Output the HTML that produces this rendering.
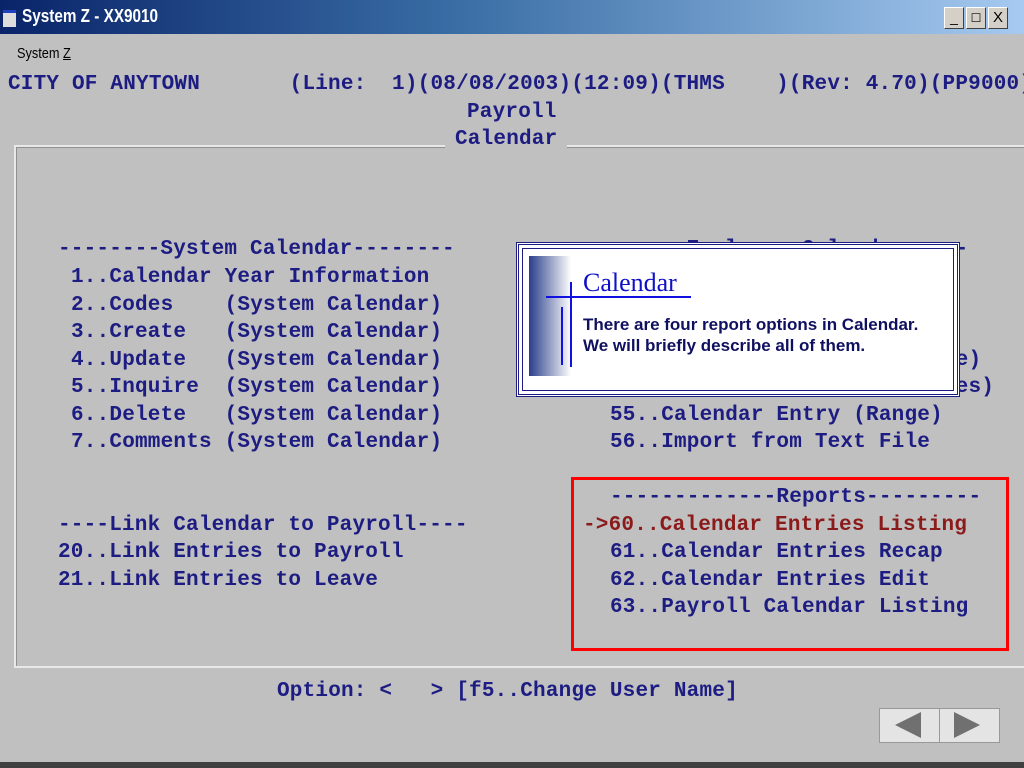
<!DOCTYPE html>
<html><head><meta charset="utf-8"><style>
body{margin:0;width:1024px;height:768px;background:#c0c0c0;position:relative;overflow:hidden;font-family:"Liberation Sans",sans-serif}
.t{position:absolute;font-family:"Liberation Mono",monospace;font-weight:bold;font-size:21px;letter-spacing:0.2px;color:#1c1c82;white-space:pre;line-height:24px}
</style></head><body>
<div style="position:absolute;left:0;top:0;width:1024px;height:34px;background:linear-gradient(90deg,#0a246a 0%,#3a6ea5 45%,#a6caf0 100%)"></div>
<div style="position:absolute;left:3px;top:10px;width:13px;height:14px;background:#ddd;border-top:3px solid #2040c0"></div>
<div style="position:absolute;left:22px;top:6px;color:#fff;font-size:18px;font-weight:bold;transform:scaleX(.85);transform-origin:left">System Z - XX9010</div>
<div style="position:absolute;left:944px;top:7px;width:74px;height:22px;display:flex;gap:2px">
<div style="width:18px;height:20px;background:#d4d0c8;border:1px solid #fff;border-right-color:#404040;border-bottom-color:#404040;font-size:14px;text-align:center;line-height:18px">_</div>
<div style="width:18px;height:20px;background:#d4d0c8;border:1px solid #fff;border-right-color:#404040;border-bottom-color:#404040;font-size:12px;text-align:center;line-height:20px">☐</div>
<div style="width:18px;height:20px;background:#d4d0c8;border:1px solid #fff;border-right-color:#404040;border-bottom-color:#404040;font-size:15px;text-align:center;line-height:20px">X</div></div>
<div style="position:absolute;left:17px;top:45px;font-size:15px;color:#000;transform:scaleX(.85);transform-origin:left">System <u>Z</u></div>
<div class="t" style="left:8px;top:73px">CITY OF ANYTOWN       (Line:  1)(08/08/2003)(12:09)(THMS    )(Rev: 4.70)(PP9000)</div>
<div class="t" style="left:467px;top:101px">Payroll</div>
<div style="position:absolute;left:14px;top:145px;width:1024px;height:519px;border:2px solid #e8e8e8;border-right:none;box-shadow:inset 1px 1px #909090"></div>
<div class="t" style="left:445px;top:128px;background:#c0c0c0;padding:0 10px">Calendar</div>
<div class="t" style="left:58px;top:238px">--------System Calendar--------</div>
<div class="t" style="left:71px;top:266px">1..Calendar Year Information</div>
<div class="t" style="left:71px;top:294px">2..Codes    (System Calendar)</div>
<div class="t" style="left:71px;top:321px">3..Create   (System Calendar)</div>
<div class="t" style="left:71px;top:349px">4..Update   (System Calendar)</div>
<div class="t" style="left:71px;top:376px">5..Inquire  (System Calendar)</div>
<div class="t" style="left:71px;top:404px">6..Delete   (System Calendar)</div>
<div class="t" style="left:71px;top:431px">7..Comments (System Calendar)</div>
<div class="t" style="left:58px;top:514px">----Link Calendar to Payroll----</div>
<div class="t" style="left:58px;top:541px">20..Link Entries to Payroll</div>
<div class="t" style="left:58px;top:569px">21..Link Entries to Leave</div>
<div class="t" style="left:597px;top:238px">-------Employee Calendar-----</div>
<div class="t" style="left:610px;top:321px">52..Calendar Entry</div>
<div class="t" style="left:610px;top:349px">53..Calendar Entry (Employee)</div>
<div class="t" style="left:610px;top:376px">54..Calendar Entry (Employees)</div>
<div class="t" style="left:610px;top:404px">55..Calendar Entry (Range)</div>
<div class="t" style="left:610px;top:431px">56..Import from Text File</div>
<div class="t" style="left:610px;top:486px">-------------Reports---------</div>
<div class="t" style="left:583px;top:514px;color:#8b1a1a">->60..Calendar Entries Listing</div>
<div class="t" style="left:610px;top:541px">61..Calendar Entries Recap</div>
<div class="t" style="left:610px;top:569px">62..Calendar Entries Edit</div>
<div class="t" style="left:610px;top:596px">63..Payroll Calendar Listing</div>
<div style="position:absolute;left:571px;top:477px;width:432px;height:168px;border:3px solid #f00"></div>
<div class="t" style="left:277px;top:680px">Option: <   > [f5..Change User Name]</div>
<div style="position:absolute;left:516px;top:242px;width:438px;height:149px;border:3px double #1c1c82;background:#fff;outline:1px solid #1c1c82;outline-offset:-7px"></div>
<div style="position:absolute;left:529px;top:256px;width:42px;height:120px;background:linear-gradient(90deg,#2a3f8a,#fff)"></div>
<div style="position:absolute;left:546px;top:296px;width:145px;height:2px;background:#1010e0"></div>
<div style="position:absolute;left:570px;top:282px;width:2px;height:85px;background:#1010e0"></div>
<div style="position:absolute;left:561px;top:307px;width:2px;height:58px;background:#1010e0"></div>
<div style="position:absolute;left:583px;top:268px;font-family:'Liberation Serif',serif;font-size:26px;color:#1010c8">Calendar</div>
<div style="position:absolute;left:583px;top:314px;font-size:17px;font-weight:bold;color:#101060;line-height:21px">There are four report options in Calendar.<br>We will briefly describe all of them.</div>
<div style="position:absolute;left:879px;top:708px;width:59px;height:33px;background:#e4e4e4;border:1px solid #999"></div>
<div style="position:absolute;left:939px;top:708px;width:59px;height:33px;background:#e4e4e4;border:1px solid #999"></div>
<svg style="position:absolute;left:879px;top:708px" width="120" height="35"><polygon points="16,17 42,4 42,30" fill="#707070"/><polygon points="75,4 101,17 75,30" fill="#707070"/></svg>
<div style="position:absolute;left:0;top:762px;width:1024px;height:6px;background:#404040"></div>
</body></html>
